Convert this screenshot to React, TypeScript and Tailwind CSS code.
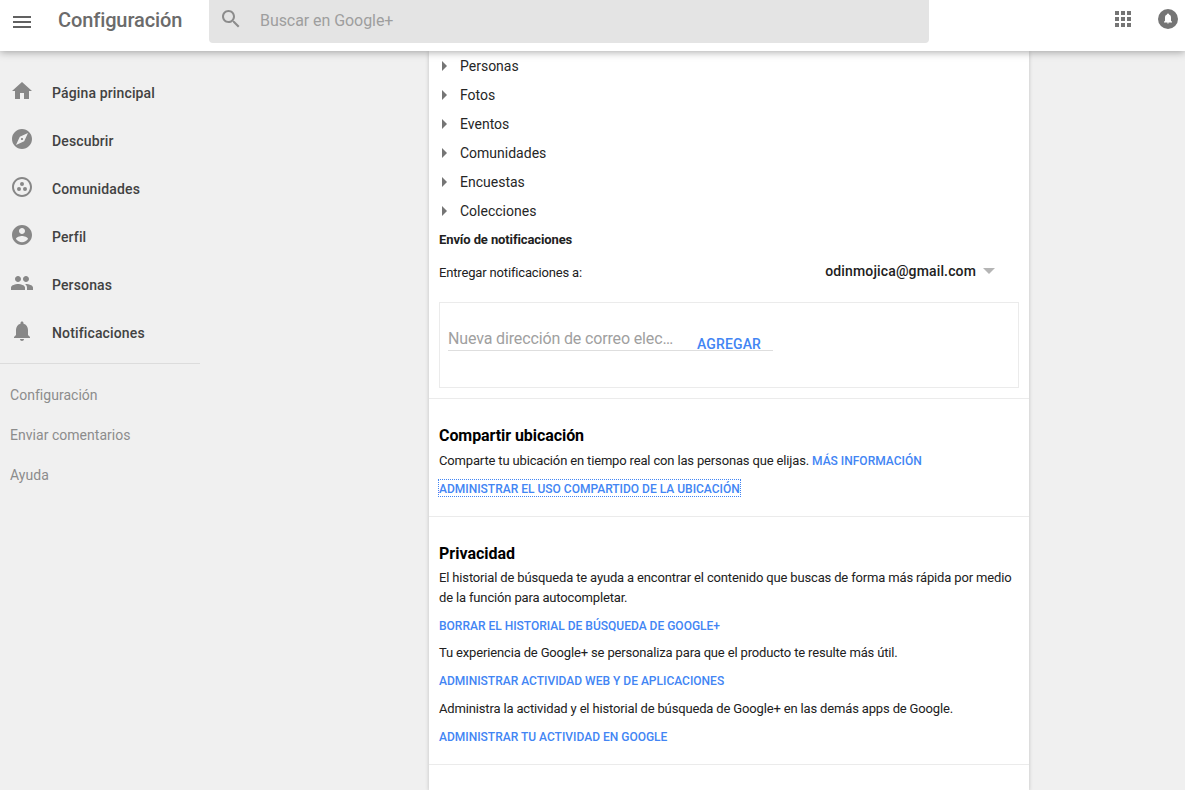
import type { ReactNode } from "react";

const ICONS = {
  menu: "M3 18h18v-2H3v2zm0-5h18v-2H3v2zm0-7v2h18V6H3z",
  search:
    "M15.5 14h-.79l-.28-.27C15.41 12.59 16 11.11 16 9.5 16 5.91 13.09 3 9.5 3S3 5.91 3 9.5 5.91 16 9.5 16c1.61 0 3.09-.59 4.23-1.57l.27.28v.79l5 4.99L20.49 19l-4.99-5zm-6 0C7.01 14 5 11.99 5 9.5S7.01 5 9.5 5 14 7.01 14 9.5 11.99 14 9.5 14z",
  apps: "M4 8h4V4H4v4zm6 12h4v-4h-4v4zm-6 0h4v-4H4v4zm0-6h4v-4H4v4zm6 0h4v-4h-4v4zm6-10v4h4V4h-4zm-6 4h4V4h-4v4zm6 6h4v-4h-4v4zm0 6h4v-4h-4v4z",
  home: "M10 20v-6h4v6h5v-8h3L12 3 2 12h3v8z",
  explore:
    "M12 10.9c-.61 0-1.1.49-1.1 1.1s.49 1.1 1.1 1.1c.61 0 1.1-.49 1.1-1.1s-.49-1.1-1.1-1.1zM12 2C6.48 2 2 6.48 2 12s4.48 10 10 10 10-4.48 10-10S17.52 2 12 2zm2.19 12.19L6 18l3.81-8.19L18 6l-3.81 8.19z",
  communities:
    "M12 2C6.48 2 2 6.48 2 12s4.48 10 10 10 10-4.48 10-10S17.52 2 12 2zm0 18c-4.41 0-8-3.59-8-8s3.59-8 8-8 8 3.59 8 8-3.59 8-8 8zM10 9a2 2 0 1 0 4 0a2 2 0 1 0-4 0zM7 14a2 2 0 1 0 4 0a2 2 0 1 0-4 0zM13 14a2 2 0 1 0 4 0a2 2 0 1 0-4 0z",
  profile:
    "M12 2C6.48 2 2 6.48 2 12s4.48 10 10 10 10-4.48 10-10S17.52 2 12 2zm0 3c1.66 0 3 1.34 3 3s-1.34 3-3 3-3-1.34-3-3 1.34-3 3-3zm0 14.2c-2.5 0-4.71-1.28-6-3.22.03-1.99 4-3.08 6-3.08 1.99 0 5.97 1.09 6 3.08-1.29 1.94-3.5 3.22-6 3.22z",
  people:
    "M16 11c1.66 0 2.99-1.34 2.99-3S17.66 5 16 5c-1.66 0-3 1.34-3 3s1.34 3 3 3zm-8 0c1.66 0 2.99-1.34 2.99-3S9.66 5 8 5C6.34 5 5 6.34 5 8s1.34 3 3 3zm0 2c-2.33 0-7 1.17-7 3.5V19h14v-2.5c0-2.33-4.67-3.5-7-3.5zm8 0c-.29 0-.62.02-.97.05 1.16.84 1.97 1.97 1.97 3.45V19h6v-2.5c0-2.33-4.67-3.5-7-3.5z",
  bell: "M12 22c1.1 0 2-.9 2-2h-4c0 1.1.89 2 2 2zm6-6v-5c0-3.07-1.64-5.64-4.5-6.32V4c0-.83-.67-1.5-1.5-1.5s-1.5.67-1.5 1.5v.68C7.63 5.36 6 7.92 6 11v5l-2 2v1h16v-1l-2-2z",
};

function Icon({ name, className }: { name: keyof typeof ICONS; className?: string }) {
  return (
    <svg viewBox="0 0 24 24" fill="currentColor" className={`size-6 shrink-0 ${className ?? ""}`}>
      <path d={ICONS[name]} />
    </svg>
  );
}

const NAV: { icon: keyof typeof ICONS; label: string }[] = [
  { icon: "home", label: "Página principal" },
  { icon: "explore", label: "Descubrir" },
  { icon: "communities", label: "Comunidades" },
  { icon: "profile", label: "Perfil" },
  { icon: "people", label: "Personas" },
  { icon: "bell", label: "Notificaciones" },
];

const CATEGORIES = ["Personas", "Fotos", "Eventos", "Comunidades", "Encuestas", "Colecciones"];

function Header() {
  return (
    <header className="relative z-10 flex h-[51px] shrink-0 items-start bg-white shadow-[0_1px_8px_rgba(0,0,0,0.35)]">
      <Icon name="menu" className="mt-2.5 ml-2.5 text-[#616161]" />
      <h1 className="mt-1.5 ml-6 w-[151px] text-xl leading-7 font-medium tracking-[-0.11px] text-[#6b6b6b]">
        Configuración
      </h1>
      <div className="flex h-[43px] w-[720px] rounded-b bg-[#e4e4e4] pl-2.5">
        <Icon name="search" className="mt-[7px] text-[#8c8c8c]" />
        <span className="mt-[9px] ml-[17px] text-base leading-6 tracking-[-0.06px] text-[#9e9e9e]">
          Buscar en Google+
        </span>
      </div>
      <Icon name="apps" className="mt-[7px] ml-auto text-[#757575]" />
      <svg viewBox="0 0 24 24" className="mt-[7px] mr-[5px] ml-[21px] size-6">
        <circle cx="12" cy="12" r="10" fill="#757575" />
        <path
          fill="#fff"
          d="M12 16.5c.7 0 1.1-.3 1.1-.8h-2.2c0 .5.4.8 1.1.8zM8 15.5v-.8l1-1v-3c0-1.6.7-2.7 2-3.1v-.3c0-.5.4-.8 1-.8s1 .3 1 .8v.3c1.300.4 2 1.500 2 3.100v3l1 1v.8z"
        />
      </svg>
    </header>
  );
}

function Sidebar() {
  return (
    <aside className="w-[200px] shrink-0 pt-[18px]">
      <nav className="border-b border-[#dcdcdc] pb-1.5">
        {NAV.map((item) => (
          <a key={item.label} className="flex h-12 items-center pl-2.5">
            <Icon name={item.icon} className="mb-1 text-[#878787]" />
            <span className="ml-[18px] text-sm leading-5 font-medium tracking-[0.14px] text-[#424242]">
              {item.label}
            </span>
          </a>
        ))}
      </nav>
      <div className="flex flex-col pt-[11px] pl-2.5 text-sm leading-10 tracking-[0.03px] text-[#8c8c8c]">
        <a>Configuración</a>
        <a>Enviar comentarios</a>
        <a>Ayuda</a>
      </div>
    </aside>
  );
}

function ActionLink({ children, className }: { children: ReactNode; className?: string }) {
  return (
    <a className={`text-xs leading-4 font-medium tracking-normal text-[#4285f4] ${className ?? ""}`}>{children}</a>
  );
}

function Notifications() {
  return (
    <section className="h-[348px] border-b border-[#ebebeb] px-2.5">
      <ul>
        {CATEGORIES.map((name) => (
          <li key={name} className="flex h-[29px] items-center text-sm text-[#262626]">
            <svg viewBox="0 0 5 10" className="mt-2.5 mr-[13px] ml-[3px] h-2.5 w-[5px] self-start fill-[#757575]">
              <path d="M0 0L5 5L0 10z" />
            </svg>
            {name}
          </li>
        ))}
      </ul>
      <h3 className="mt-[5px] text-[13px] leading-5 font-bold tracking-[-0.11px] text-[#212121]">
        Envío de notificaciones
      </h3>
      <div className="mt-2.5 flex h-6 items-center text-[13px] text-[#212121]">
        <span className="mt-0.5 tracking-[-0.16px]">Entregar notificaciones a:</span>
        <span className="mb-0.5 ml-auto text-sm font-medium tracking-[0.14px]">odinmojica@gmail.com</span>
        <svg viewBox="0 0 12 6" className="mr-6 mb-0.5 ml-[7px] h-1.5 w-3 fill-[#b5b5b5]">
          <path d="M0 0H12L6 6z" />
        </svg>
      </div>
      <div className="mt-[18px] h-[86px] border border-[#ebebeb] px-2 pt-[23px]">
        <div className="flex h-[25px] w-[325px] border-b border-[#dedede]">
          <span className="mt-px w-[249px] text-base leading-6 tracking-[-0.14px] text-[#a0a0a0]">
            Nueva dirección de correo elec…
          </span>
          <span className="mt-2 text-sm leading-5 font-medium tracking-[0.14px] text-[#4285f4]">AGREGAR</span>
        </div>
      </div>
    </section>
  );
}

function Location() {
  return (
    <section className="h-[118px] border-b border-[#ebebeb] px-2.5 pt-[25px] text-[13px] leading-5 tracking-[-0.157px] text-[#212121]">
      <h2 className="text-base leading-6 font-bold tracking-[-0.07px] text-black">Compartir ubicación</h2>
      <p className="mt-[3px]">
        Comparte tu ubicación en tiempo real con las personas que elijas. <ActionLink>MÁS INFORMACIÓN</ActionLink>
      </p>
      <ActionLink className="mt-[9px] block h-4 w-[301px] pt-px whitespace-nowrap outline-1 outline-dotted outline-[#4285f4]">
        ADMINISTRAR EL USO COMPARTIDO DE LA UBICACIÓN
      </ActionLink>
    </section>
  );
}

function Privacy() {
  return (
    <section className="h-[248px] border-b border-[#ebebeb] px-2.5 pt-[25px] text-[13px] leading-5 tracking-[-0.155px] text-[#212121]">
      <h2 className="text-base leading-6 font-bold tracking-normal text-black">Privacidad</h2>
      <p className="mt-0.5">
        El historial de búsqueda te ayuda a encontrar el contenido que buscas de forma más rápida por medio de la
        función para autocompletar.
      </p>
      <ActionLink className="mt-2.5 block">BORRAR EL HISTORIAL DE BÚSQUEDA DE GOOGLE+</ActionLink>
      <p className="mt-[9px]">Tu experiencia de Google+ se personaliza para que el producto te resulte más útil.</p>
      <ActionLink className="mt-2.5 block">ADMINISTRAR ACTIVIDAD WEB Y DE APLICACIONES</ActionLink>
      <p className="mt-2.5">Administra la actividad y el historial de búsqueda de Google+ en las demás apps de Google.</p>
      <ActionLink className="mt-2.5 block">ADMINISTRAR TU ACTIVIDAD EN GOOGLE</ActionLink>
    </section>
  );
}

export default function App() {
  return (
    <div className="flex h-[790px] flex-col overflow-hidden bg-[#f0f0f0] font-['Roboto',sans-serif]">
      <Header />
      <div className="flex min-h-0 flex-1">
        <Sidebar />
        <main className="ml-[229px] h-full w-[600px] bg-white shadow-[0_1px_4px_rgba(0,0,0,0.2)]">
          <Notifications />
          <Location />
          <Privacy />
        </main>
      </div>
    </div>
  );
}
